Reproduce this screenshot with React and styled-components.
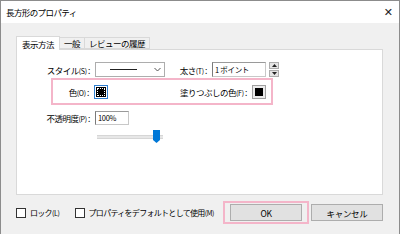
import React from "react";
import styled, { createGlobalStyle } from "styled-components";

const GlobalStyle = createGlobalStyle`
  html, body {
    margin: 0;
    padding: 0;
    background: #f0f0f0;
  }
  body {
    font-family: "Noto Sans CJK JP", "Liberation Sans", sans-serif;
    font-size: 8px;
    color: #000;
  }
`;

const Window = styled.div`
  width: 400px;
  height: 234px;
  box-sizing: border-box;
  border: 1px solid #8c8c8c;
  border-bottom: none;
  background: #f0f0f0;
  display: flex;
  flex-direction: column;
  overflow: hidden;
`;

const TitleBar = styled.div`
  height: 22px;
  background: #fff;
  display: flex;
  align-items: center;
  justify-content: space-between;
  padding: 0 6px 0 5px;
  font-size: 8.5px;
  letter-spacing: -0.6px;
`;

const Close = styled.span`
  font-family: "DejaVu Sans", sans-serif;
  font-size: 11px;
  color: #222;
  letter-spacing: 0;
`;

const Body = styled.div`
  flex: 1;
  padding: 12px 16px 0 15px;
  display: flex;
  flex-direction: column;
`;

const TabStrip = styled.div`
  display: flex;
  align-items: flex-end;
  height: 14px;
  position: relative;
  z-index: 1;
`;

const Tab = styled.div`
  box-sizing: border-box;
  height: ${(p) => (p.$active ? "14px" : "12px")};
  padding: 0 ${(p) => (p.$active ? "5px" : "4px")};
  background: ${(p) => (p.$active ? "#fff" : "#f0f0f0")};
  border: 1px solid #d9d9d9;
  border-bottom: ${(p) => (p.$active ? "none" : "1px solid #d9d9d9")};
  border-left: ${(p) => (p.$first || p.$active ? "1px solid #d9d9d9" : "none")};
  display: flex;
  align-items: center;
  font-size: 8.5px;
  letter-spacing: -0.5px;
  margin-bottom: ${(p) => (p.$active ? "-1px" : "0")};
`;

const Panel = styled.div`
  height: 146px;
  box-sizing: border-box;
  background: #fff;
  border: 1px solid #d9d9d9;
  padding-top: 12px;
  display: flex;
  flex-direction: column;
`;

const Row = styled.div`
  display: flex;
  align-items: center;
  height: ${(p) => p.$h || 15}px;
  margin-top: ${(p) => p.$mt || 0}px;
`;

const Label = styled.span`
  width: ${(p) => p.$w}px;
  margin-left: ${(p) => p.$ml || 0}px;
  text-align: right;
  padding-right: 5px;
  box-sizing: border-box;
  white-space: nowrap;
  letter-spacing: -0.5px;
  font-size: 8.5px;
`;

const Combo = styled.div`
  width: 70px;
  height: 15px;
  box-sizing: border-box;
  border: 1px solid #adadad;
  display: flex;
  align-items: center;
  background: #fff;
`;

const ComboLine = styled.div`
  flex: 1;
  display: flex;
  justify-content: center;
  &::after {
    content: "";
    width: 27px;
    height: 1px;
    background: #222;
  }
`;

const ComboArrow = styled.div`
  width: 13px;
  height: 100%;
  display: flex;
  align-items: center;
  justify-content: center;
`;

const Field = styled.div`
  width: ${(p) => p.$w}px;
  height: ${(p) => p.$h || 15}px;
  box-sizing: border-box;
  border: 1px solid #c8c8c8;
  border-left-color: #7a7a7a;
  border-top-color: #9a9a9a;
  padding-left: 2px;
  display: flex;
  align-items: center;
  font-size: 7.5px;
  letter-spacing: -0.3px;
  background: #fff;
  white-space: nowrap;
`;

const Spinner = styled.div`
  margin-left: 3px;
  display: flex;
  flex-direction: column;
  gap: 1px;
  height: 16px;
`;

const SpinBtn = styled.div`
  width: 10px;
  height: 7px;
  box-sizing: border-box;
  border: 1px solid #adadad;
  background: #e5e5e5;
  display: flex;
  align-items: center;
  justify-content: center;
`;

const Highlight = styled.div`
  margin-left: 34px;
  width: 222px;
  height: 27px;
  box-sizing: border-box;
  border: 2.5px solid #f4b5c9;
  display: flex;
  align-items: center;
`;

const Swatch = styled.div`
  width: 14px;
  height: 14px;
  box-sizing: border-box;
  border: 1px solid ${(p) => (p.$focused ? "#2f7fd0" : "#a0a0a0")};
  padding: ${(p) => (p.$focused ? "1px" : "2px")};
  background: ${(p) => (p.$focused ? "#fff" : "#ececec")};
  &::after {
    content: "";
    display: block;
    width: 100%;
    height: 100%;
    box-sizing: border-box;
    background: #000;
    outline: ${(p) => (p.$focused ? "1px dotted #fff" : "none")};
    outline-offset: -2px;
  }
`;

const Slider = styled.div`
  margin-left: 80px;
  width: 66px;
  height: 14px;
  position: relative;
  display: flex;
  align-items: center;
  &::before {
    content: "";
    width: 100%;
    height: 2px;
    background: #e7e7e7;
    border: 1px solid #d6d6d6;
    border-left: none;
    border-right: none;
  }
`;

const Thumb = styled.svg`
  position: absolute;
  right: 3px;
  top: 0;
`;

const Footer = styled.div`
  flex: 1;
  display: flex;
  align-items: center;
  padding-bottom: 4px;
`;

const Check = styled.label`
  display: flex;
  align-items: center;
  margin-left: ${(p) => p.$ml || 0}px;
  &::before {
    content: "";
    flex: none;
    width: 10px;
    height: 10px;
    box-sizing: border-box;
    border: 1px solid #333;
    background: #fff;
    margin-right: 4px;
  }
`;

const CheckText = styled.span`
  white-space: nowrap;
  font-size: 8px;
  letter-spacing: -0.7px;
`;

const Mn = styled.span`
  font-size: 7px;
  letter-spacing: -0.3px;
`;

const OkFrame = styled.div`
  margin-left: auto;
  border: 2.5px solid #f4b5c9;
  padding: 1px 5px;
  margin-right: 1px;
`;

const Button = styled.div`
  width: ${(p) => p.$w || 72}px;
  height: 17px;
  box-sizing: border-box;
  border: 1px solid #adadad;
  background: #e1e1e1;
  display: flex;
  align-items: center;
  justify-content: center;
  font-size: 8.5px;
  letter-spacing: -0.3px;
  margin-left: ${(p) => p.$ml || 0}px;
`;

export default function App() {
  return (
    <>
      <GlobalStyle />
      <Window>
        <TitleBar>
          <span>長方形のプロパティ</span>
          <Close>✕</Close>
        </TitleBar>
        <Body>
          <TabStrip>
            <Tab $active $first>表示方法</Tab>
            <Tab>一般</Tab>
            <Tab>レビューの履歴</Tab>
          </TabStrip>
          <Panel>
            <Row>
              <Label $w={78}>
                スタイル<Mn>(S)</Mn> :
              </Label>
              <Combo>
                <ComboLine />
                <ComboArrow>
                  <svg width="7" height="5" viewBox="0 0 7 5">
                    <path d="M0.5 1 L3.5 4 L6.5 1" fill="none" stroke="#555" strokeWidth="1" />
                  </svg>
                </ComboArrow>
              </Combo>
              <Label $w={47}>
                太さ<Mn>(T)</Mn> :
              </Label>
              <Field $w={54}>1 ポイント</Field>
              <Spinner>
                <SpinBtn>
                  <svg width="5" height="3" viewBox="0 0 5 3">
                    <path d="M0 3 L2.5 0 L5 3 Z" fill="#222" />
                  </svg>
                </SpinBtn>
                <SpinBtn>
                  <svg width="5" height="3" viewBox="0 0 5 3">
                    <path d="M0 0 L2.5 3 L5 0 Z" fill="#222" />
                  </svg>
                </SpinBtn>
              </Spinner>
            </Row>
            <Row $h={27} $mt={1}>
              <Highlight>
                <Label $w={41}>
                  色<Mn>(O)</Mn> :
                </Label>
                <Swatch $focused />
                <Label $w={144}>
                  塗りつぶしの色<Mn>(F)</Mn> :
                </Label>
                <Swatch />
              </Highlight>
            </Row>
            <Row $mt={5}>
              <Label $w={78}>
                不透明度<Mn>(P)</Mn> :
              </Label>
              <Field $w={34} $h={14}>100%</Field>
            </Row>
            <Row $h={14} $mt={5}>
              <Slider>
                <Thumb width="7" height="13" viewBox="0 0 7 13">
                  <path d="M0 0 H7 V10 L3.5 13 L0 10 Z" fill="#0078d7" />
                </Thumb>
              </Slider>
            </Row>
          </Panel>
          <Footer>
            <Check>
              <CheckText>
                ロック<Mn>(L)</Mn>
              </CheckText>
            </Check>
            <Check $ml={15}>
              <CheckText>
                プロパティをデフォルトとして使用<Mn>(M)</Mn>
              </CheckText>
            </Check>
            <OkFrame>
              <Button $w={72}>OK</Button>
            </OkFrame>
            <Button $w={72} $ml={1}>キャンセル</Button>
          </Footer>
        </Body>
      </Window>
    </>
  );
}
